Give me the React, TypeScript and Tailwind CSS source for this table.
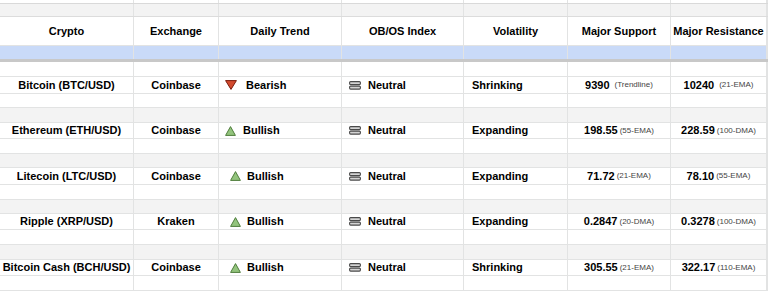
import React from "react";

const H: Record<number, string> = {
  14: "h-[14px]",
  15: "h-[15px]",
  16: "h-[16px]",
  17: "h-[17px]",
};

type Row = {
  crypto: string;
  exchange: string;
  trend: "bull" | "bear";
  trendPad: string;
  trendGap: string;
  vol: string;
  sup: string;
  supNote: string;
  res: string;
  resNote: string;
  hs: [number, number, number];
  topGray: boolean;
};

const rows: Row[] = [
  { crypto: "Bitcoin (BTC/USD)", exchange: "Coinbase", trend: "bear", trendPad: "pl-[6px]", trendGap: "gap-[9px]", vol: "Shrinking", sup: "9390", supNote: "(Trendline)", res: "10240", resNote: "(21-EMA)", hs: [15, 17, 14], topGray: false },
  { crypto: "Ethereum (ETH/USD)", exchange: "Coinbase", trend: "bull", trendPad: "pl-[6px]", trendGap: "gap-[7px]", vol: "Expanding", sup: "198.55", supNote: "(55-EMA)", res: "228.59", resNote: "(100-DMA)", hs: [15, 16, 15], topGray: true },
  { crypto: "Litecoin (LTC/USD)", exchange: "Coinbase", trend: "bull", trendPad: "pl-[11px]", trendGap: "gap-[6px]", vol: "Expanding", sup: "71.72", supNote: "(21-EMA)", res: "78.10", resNote: "(55-EMA)", hs: [14, 17, 15], topGray: true },
  { crypto: "Ripple (XRP/USD)", exchange: "Kraken", trend: "bull", trendPad: "pl-[11px]", trendGap: "gap-[6px]", vol: "Expanding", sup: "0.2847", supNote: "(20-DMA)", res: "0.3278", resNote: "(100-DMA)", hs: [14, 16, 15], topGray: true },
  { crypto: "Bitcoin Cash (BCH/USD)", exchange: "Coinbase", trend: "bull", trendPad: "pl-[11px]", trendGap: "gap-[6px]", vol: "Shrinking", sup: "305.55", supNote: "(21-EMA)", res: "322.17", resNote: "(110-EMA)", hs: [15, 16, 15], topGray: true },
];

const colW = ["w-[134px]", "w-[85px]", "w-[123px]", "w-[122px]", "w-[104px]", "w-[103px]", "w-[96px]", "flex-1"];

function Bear() {
  return (
    <svg width="12" height="10" viewBox="0 0 12 10" className="shrink-0">
      <polygon points="0.6,0.6 11.4,0.6 6,9.4" fill="#d24a2e" stroke="#7a1a0c" strokeWidth="1" strokeLinejoin="round" />
    </svg>
  );
}

function Bull() {
  return (
    <svg width="11" height="10" viewBox="0 0 11 10" className="shrink-0">
      <polygon points="5.5,0.6 10.4,9.4 0.6,9.4" fill="#93c47d" stroke="#4f7d3c" strokeWidth="1" strokeLinejoin="round" />
    </svg>
  );
}

function Neutral() {
  return (
    <svg width="12" height="9" viewBox="0 0 12 9" className="shrink-0">
      <rect x="0.6" y="0.6" width="10.8" height="3" rx="1" fill="#d4d4d4" stroke="#4a4a4a" strokeWidth="1.1" />
      <rect x="0.6" y="5.1" width="10.8" height="3" rx="1" fill="#d4d4d4" stroke="#4a4a4a" strokeWidth="1.1" />
    </svg>
  );
}

function BlankRow({ h, bg, border = "border-b border-[#e2e3e3]" }: { h: string; bg: string; border?: string }) {
  return (
    <div className={`flex ${h} ${bg} ${border} box-border`}>
      {colW.map((w, i) => (
        <div key={i} className={`${w} shrink-0 h-full border-r border-[#e2e3e3] box-border`} />
      ))}
    </div>
  );
}

export default function App() {
  const cell = "shrink-0 h-full border-r border-[#e2e3e3] box-border flex items-center whitespace-nowrap";
  return (
    <div
      className="w-[768px] h-[292px] overflow-hidden bg-white text-black font-bold text-[11px] leading-none"
      style={{ fontFamily: '"Liberation Sans", Arial, sans-serif' }}
    >
      <BlankRow h="h-[4px]" bg="bg-white" border="border-b border-[#d9d9d9]" />
      <BlankRow h="h-[13px]" bg="bg-[#f3f3f3]" border="border-b border-[#dcdcdc]" />
      <div className="flex h-[29px] border-b border-[#e2e3e3] box-border">
        {["Crypto", "Exchange", "Daily Trend", "OB/OS Index", "Volatility", "Major Support", "Major Resistance", ""].map((t, i) => (
          <div key={i} className={`${colW[i]} ${cell} justify-center`}>
            {t}
          </div>
        ))}
      </div>
      <BlankRow h="h-[16px]" bg="bg-[#c9daf8]" border="border-b-[3px] border-[#c8c8c8]" />
      {rows.map((r) => (
        <div key={r.crypto}>
          <BlankRow h={H[r.hs[0]]} bg={r.topGray ? "bg-[#f3f3f3]" : "bg-white"} />
          <div className={`flex ${H[r.hs[1]]} border-b border-[#e2e3e3] box-border`}>
            <div className={`${colW[0]} ${cell} justify-center`}>{r.crypto}</div>
            <div className={`${colW[1]} ${cell} justify-center`}>{r.exchange}</div>
            <div className={`${colW[2]} ${cell} ${r.trendPad} ${r.trendGap}`}>
              {r.trend === "bear" ? <Bear /> : <Bull />}
              <span>{r.trend === "bear" ? "Bearish" : "Bullish"}</span>
            </div>
            <div className={`${colW[3]} ${cell} pl-[7px] gap-[7px]`}>
              <Neutral />
              <span>Neutral</span>
            </div>
            <div className={`${colW[4]} ${cell} pl-[8px]`}>{r.vol}</div>
            <div className={`${colW[5]} ${cell} justify-center`}>
              <span>{r.sup}</span>
              <span className={`font-normal text-[8px] text-[#444] ${r.sup === "9390" ? "ml-[5px]" : "ml-[2px]"}`}>{r.supNote}</span>
            </div>
            <div className={`${colW[6]} ${cell} justify-center`}>
              <span>{r.res}</span>
              <span className={`font-normal text-[8px] text-[#444] ${r.res === "10240" ? "ml-[5px]" : "ml-[2px]"}`}>{r.resNote}</span>
            </div>
            <div className={`${colW[7]} ${cell}`} />
          </div>
          <BlankRow h={H[r.hs[2]]} bg="bg-white" />
        </div>
      ))}
    </div>
  );
}
